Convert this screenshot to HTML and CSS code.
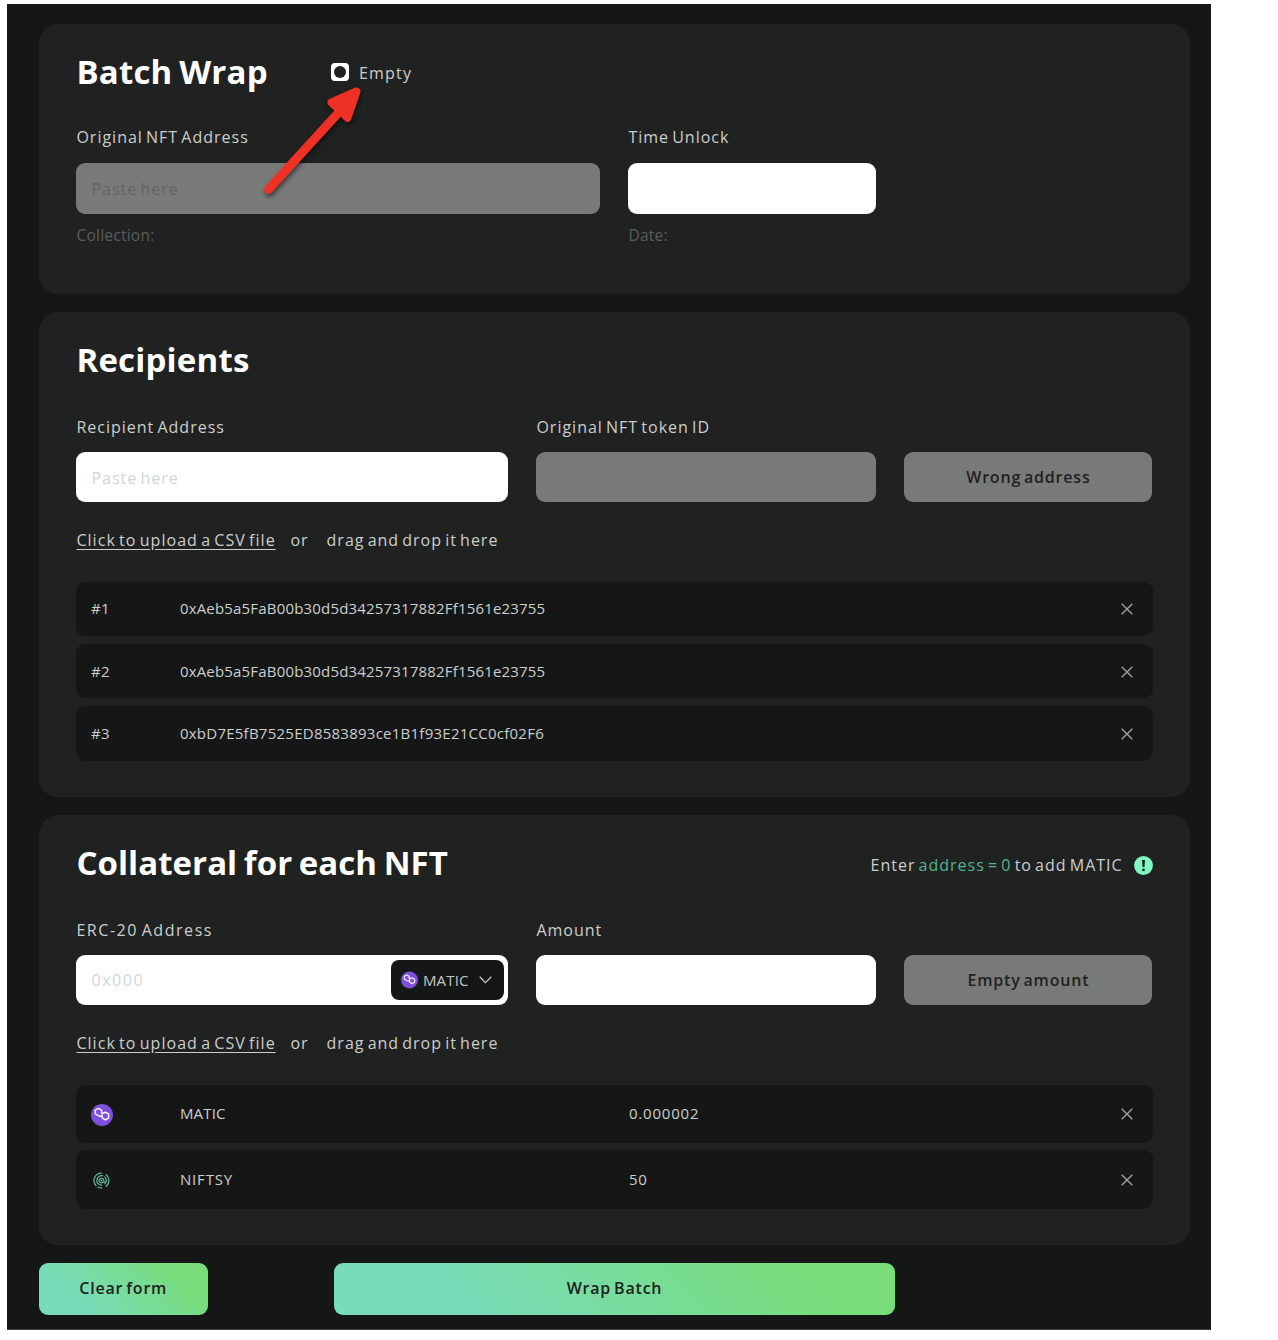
FILE: index.html
```html
<!DOCTYPE html>
<html lang="en">
<head>
<meta charset="utf-8">
<title>Batch Wrap</title>
<link rel="stylesheet" href="styles.css">
</head>
<body>
<svg class="defs" width="0" height="0">
  <symbol id="close" viewBox="0 0 12 12"><path d="M.7.7l10.6 10.6M11.3.7L.7 11.3" fill="none" stroke="#9fa1a0" stroke-width="1.4"/></symbol>
  <symbol id="matic" viewBox="0 0 22 22">
    <circle cx="11" cy="11" r="11" fill="#7d4fdc"/>
    <path d="M10.8 12.6L7.4 11.7 4.2 9.8V6.2L7.4 4.4 10.6 6.2V9.2L11.6 10.2M11.2 9.5L14.4 8.2 17.6 10V14L14.4 15.9 11.2 14V10.8" fill="none" stroke="#f3effc" stroke-width="1.5" stroke-linejoin="round"/>
  </symbol>
  <symbol id="niftsy" viewBox="0 0 18 18">
    <g fill="none" stroke="#5fb896" stroke-width="1.3" stroke-linecap="round">
      <path d="M9 1.1A7.9 7.9 0 0 0 3.3 14.5M5.4 16.1A7.9 7.9 0 0 0 9.3 16.9M14 2.9A7.9 7.9 0 0 1 14 15.1"/>
      <path d="M10.5 4A5.1 5.1 0 1 0 9.3 14M12.4 5.2A5.1 5.1 0 0 1 12.7 12.6"/>
      <path d="M10.9 10.7A2.5 2.5 0 1 1 11.4 8.6C11.4 10.3 12 11 12.7 10.7"/>
      <circle cx="9" cy="9" r=".5"/>
    </g>
  </symbol>
</svg>
<main class="page">
  <section class="card card-wrap">
    <header class="head">
      <h2 class="roomy">Batch Wrap</h2>
      <label class="check"><span class="box"><i></i></span><span class="check-text">Empty</span></label>
    </header>
    <div class="grid">
      <div class="field s6">
        <span class="label">Original NFT Address</span>
        <div class="input tall off">Paste here</div>
        <span class="hint">Collection:</span>
      </div>
      <div class="field s3">
        <span class="label">Time Unlock</span>
        <div class="input tall"></div>
        <span class="hint">Date:</span>
      </div>
    </div>
  </section>

  <section class="card card-recipients">
    <header class="head"><h2 class="roomy">Recipients</h2></header>
    <div class="grid">
      <div class="field s5"><span class="label">Recipient Address</span><div class="input">Paste here</div></div>
      <div class="field s4"><span class="label">Original NFT token ID</span><div class="input off"></div></div>
      <button class="btn-off s3">Wrong address</button>
    </div>
    <p class="upload"><a>Click to upload a CSV file</a><span class="or">or</span><span>drag and drop it here</span></p>
    <div class="list">
      <div class="row"><span class="num">#1</span><span class="hash">0xAeb5a5FaB00b30d5d34257317882Ff1561e23755</span><svg class="x"><use href="#close"/></svg></div>
      <div class="row"><span class="num">#2</span><span class="hash">0xAeb5a5FaB00b30d5d34257317882Ff1561e23755</span><svg class="x"><use href="#close"/></svg></div>
      <div class="row"><span class="num">#3</span><span class="hash caps">0xbD7E5fB7525ED8583893ce1B1f93E21CC0cf02F6</span><svg class="x"><use href="#close"/></svg></div>
    </div>
  </section>

  <section class="card card-collateral">
    <header class="head">
      <h2>Collateral for each NFT</h2>
      <div class="note">
        <span>Enter <em>address = 0</em> to add MATIC</span>
        <svg width="19" height="19" viewBox="0 0 19 19"><circle cx="9.5" cy="9.5" r="9.4" fill="#7ff9c0"/><path d="M8 4h3l-.5 7h-2z" fill="#202221"/><circle cx="9.5" cy="13.9" r="1.4" fill="#202221"/></svg>
      </div>
    </header>
    <div class="grid">
      <div class="field s5">
        <span class="label wide">ERC-20 Address</span>
        <div class="input with-select"><span class="zero">0x000</span>
          <div class="select">
            <svg width="17" height="18"><use href="#matic"/></svg>
            <span>MATIC</span>
            <svg class="chev" width="13" height="8" viewBox="0 0 13 8"><path d="M.7.8l5.8 5.8L12.3.8" fill="none" stroke="#c4c6c5" stroke-width="1.3"/></svg>
          </div>
        </div>
      </div>
      <div class="field s4"><span class="label">Amount</span><div class="input"></div></div>
      <button class="btn-off s3">Empty amount</button>
    </div>
    <p class="upload"><a>Click to upload a CSV file</a><span class="or">or</span><span>drag and drop it here</span></p>
    <div class="list assets">
      <div class="row"><span class="num"><svg class="coin" width="22" height="22"><use href="#matic"/></svg></span><span class="name">MATIC</span><span class="amount">0.000002</span><svg class="x"><use href="#close"/></svg></div>
      <div class="row"><span class="num"><svg class="coin small" width="17" height="17"><use href="#niftsy"/></svg></span><span class="name spaced">NIFTSY</span><span class="amount">50</span><svg class="x"><use href="#close"/></svg></div>
    </div>
  </section>

  <footer class="actions">
    <button class="btn clear">Clear form</button>
    <button class="btn wrap">Wrap Batch</button>
  </footer>

  <svg class="arrow" width="120" height="130" viewBox="255 80 120 130">
    <g fill="#ee3124" stroke="#ee3124" stroke-linecap="round" stroke-linejoin="round">
      <path d="M268.6 189.3L340 111" stroke-width="9"/>
      <path d="M356.5 91.5L331.5 102.5 347.5 118z" stroke-width="8"/>
    </g>
  </svg>
</main>
</body>
</html>
```
FILE: styles.css
```css
* { box-sizing: border-box; }
body {
  margin: 0;
  background: #fff;
  font-family: "Open Sans", "Noto Sans", sans-serif;
  font-size: 16px;
  line-height: 24px;
  letter-spacing: 1px;
  word-spacing: -2px;
  color: #cccecd;
}
.defs { position: absolute; }
.page {
  position: relative;
  width: 1204px;
  height: 1326px;
  margin: 4px 0 0 7px;
  padding: 20px 21px 0 32px;
  background: #151716;
  border-bottom: 1px solid #3a3c3b;
  display: flex;
  flex-direction: column;
}
.card {
  background: #202221;
  border-radius: 19px;
  padding: 27px 37.4px 0;
  margin-bottom: 18px;
}
.card-wrap { height: 269.5px; margin-bottom: 18.5px; }
.card-recipients { height: 485px; }
.card-collateral { height: 430px; }
.head { display: flex; height: 40px; margin-bottom: 35.9px; }
.card-wrap .head { margin-bottom: 34px; }
h2 {
  margin: 0;
  font-size: 33px;
  line-height: 41px;
  font-weight: 700;
  letter-spacing: .05px;
  word-spacing: -2px;
  color: #fff;
}
.roomy { letter-spacing: .2px; }
.check { display: flex; align-items: center; padding: 2px 0 0; margin-left: auto; margin-right: 740.5px; gap: 9.5px; height: 40px; }
.box { width: 18px; height: 18px; margin-top: -1px; border-radius: 4px; background: #fff; display: grid; place-items: center; }
.box i { width: 12px; height: 12px; border-radius: 50%; background: #202221; }
.check-text { padding-top: 1px; letter-spacing: 1.2px; }
.grid { display: grid; grid-template-columns: repeat(12, 64px); column-gap: 28px; align-items: end; }
.s3 { grid-column: span 3; }
.s4 { grid-column: span 4; }
.s5 { grid-column: span 5; }
.s6 { grid-column: span 6; }
.field { display: flex; flex-direction: column; }
.label { margin-bottom: 13.5px; }
.wide { letter-spacing: 1.55px; }
.input {
  height: 50px;
  border-radius: 9px;
  background: #fff;
  color: #cdd7d9;
  padding: 1px 15px 0;
  line-height: 51px;
}
.tall { height: 51.5px; }
.off { background: #787a79; color: #616565; }
.hint { margin-top: 9px; color: #5b5d5c; font-size: 15.5px; letter-spacing: .25px; }
button {
  border: 0;
  border-radius: 9px;
  font: 600 16px/24px "Open Sans", sans-serif;
  letter-spacing: .8px;
  word-spacing: -2px;
  color: #202221;
  padding: 0 0 2px;
}
.btn-off { height: 50px; background: #787a79; padding-bottom: 1px; }
.upload { display: flex; margin: 25.6px 0 29.7px; }
.upload a { text-decoration: underline; text-underline-offset: 3px; letter-spacing: 1.05px; width: 199px; white-space: nowrap; }
.or { margin: 0 18px 0 15px; }
.list { display: flex; flex-direction: column; gap: 7.8px; font-size: 15px; letter-spacing: .18px; word-spacing: 0; }
.row { height: 54.5px; border-radius: 9px; background: #151716; display: flex; align-items: center; padding: 0 19.5px 1px 14.5px; }
.assets { gap: 7.3px; }
.assets .row { height: 58.3px; }
.num { width: 89px; letter-spacing: .5px; display: flex; align-items: center; }
.caps { letter-spacing: .25px; }
.name { width: 449px; }
.spaced { letter-spacing: .85px; }
.amount { letter-spacing: .8px; }
.x { width: 12px; height: 12px; margin-left: auto; margin-top: 2px; }
.coin { margin-top: 3px; }
.small { margin-left: 2px; }
.note { display: flex; align-items: center; gap: 11px; margin-left: auto; padding-top: 6px; }
.note svg { margin-top: 1px; }
.note em { font-style: normal; color: #55b291; }
.with-select { display: flex; justify-content: space-between; padding-right: 4.5px; padding-top: 0; align-items: center; }
.zero { letter-spacing: 1.6px; }
.select {
  width: 113px;
  height: 40.5px;
  margin-top: -1px;
  border-radius: 8px;
  background: #151716;
  color: #c4c6c5;
  display: flex;
  align-items: center;
  padding: 0 12px 0 10px;
  font-size: 15px;
  line-height: 24px;
  letter-spacing: .2px;
}
.select span { margin-left: 5px; }
.chev { margin-left: auto; }
.actions { display: flex; gap: 126.5px; }
.btn { height: 51.5px; background: linear-gradient(45deg, #78dcb8 25%, #78dc78 85%); }
.clear { width: 168.5px; }
.wrap { width: 561px; }
.arrow { position: absolute; left: 248px; top: 76px; filter: drop-shadow(1px 3px 2px rgba(0, 0, 0, .5)); }
```
